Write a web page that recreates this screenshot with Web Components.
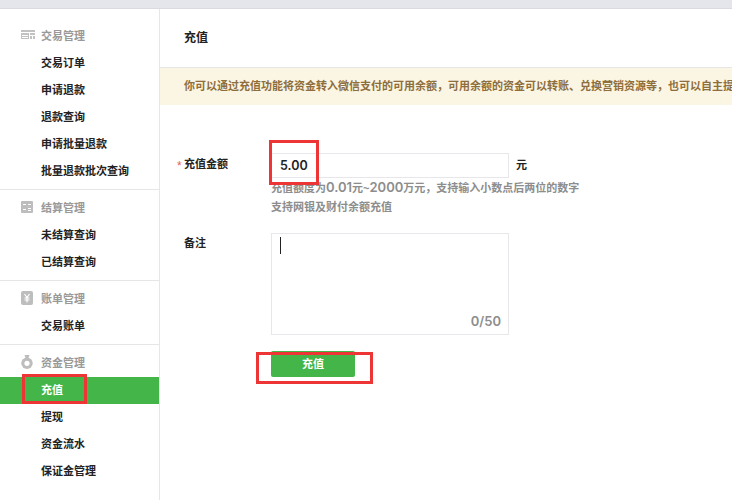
<!DOCTYPE html>
<html lang="zh">
<head>
<meta charset="utf-8">
<title>充值</title>
<style>
  html, body { margin: 0; height: 100%; overflow: hidden; background: #fff; }
  body { font-family: "Liberation Sans", "Noto Sans CJK SC", sans-serif; }
</style>
</head>
<body>
<pay-app>
  <side-nav slot="nav">
    <nav-group label="交易管理" icon="trade" items="交易订单,申请退款,退款查询,申请批量退款,批量退款批次查询"></nav-group>
    <nav-group label="结算管理" icon="settle" items="未结算查询,已结算查询"></nav-group>
    <nav-group label="账单管理" icon="bill" items="交易账单"></nav-group>
    <nav-group label="资金管理" icon="fund" items="充值,提现,资金流水,保证金管理" active="充值" last></nav-group>
  </side-nav>
  <recharge-page></recharge-page>
</pay-app>
<script>
class PayApp extends HTMLElement {
  constructor() {
    super();
    const shadow = this.attachShadow({ mode: "open" });
    shadow.innerHTML = `
      <style>
        :host { display: block; position: relative; height: 500px; overflow: hidden; }
        .top { height: 8px; background: #e4e6eb; border-bottom: 1px solid #d9dbdf; }
        .body { display: flex; height: 491px; }
        .main { flex: 1; min-width: 0; overflow: hidden; }
        .mark { position: absolute; border: 3px solid #ee3536; box-sizing: border-box; }
      </style>
      <div class="top"></div>
      <div class="body">
        <slot name="nav"></slot>
        <div class="main"><slot></slot></div>
      </div>
      <!-- red annotation boxes drawn over the screenshot -->
      <div class="mark" style="left:22px;top:374px;width:65px;height:30px"></div>
      <div class="mark" style="left:269px;top:140px;width:50px;height:45px"></div>
      <div class="mark" style="left:256px;top:352px;width:117px;height:32px"></div>
    `;
  }
}

class SideNav extends HTMLElement {
  constructor() {
    super();
    const shadow = this.attachShadow({ mode: "open" });
    shadow.innerHTML = `
      <style>
        :host { display: block; width: 159px; flex: none; border-right: 1px solid #e6e6e6; padding-top: 13px; }
      </style>
      <slot></slot>
    `;
  }
}

const NAV_ICONS = {
  trade: `<svg width="14" height="9" viewBox="0 0 14 9"><path fill="#c2c2c2" d="M0 0h14v2H0zM0 3h8v6H0zM9 3h5v2H9zM9 6h2v3H9zM12 6h2v3h-2z"/><path fill="#fff" d="M1 5h6v1H1zM1 7h6v1H1z"/></svg>`,
  settle: `<svg width="12" height="12" viewBox="0 0 12 12"><rect width="12" height="12" rx="1" fill="#bdbdbd"/><path fill="#fff" d="M2 3h3v1H2zM7 3h3v1H7zM2 8h3v1H2zM7 7h3v1H7zM7 9h3v1H7z"/></svg>`,
  bill: `<svg width="12" height="14" viewBox="0 0 12 14"><rect width="12" height="14" rx="2" fill="#bdbdbd"/><path fill="none" stroke="#fff" stroke-width="1.2" d="M3.500 3 6 6.500 8.500 3M6 6.500V11.500M3.500 7h5M3.500 9h5"/></svg>`,
  fund: `<svg width="12" height="14" viewBox="0 0 12 14"><path fill="#bdbdbd" d="M3.500 0h5L7.500 3h-3z"/><circle cx="6" cy="8.300" r="5.700" fill="#bdbdbd"/><circle cx="6" cy="8.300" r="2.600" fill="#fff"/></svg>`
};

class NavGroup extends HTMLElement {
  connectedCallback() {
    const shadow = this.attachShadow({ mode: "open" });
    const items = this.getAttribute("items").split(",");
    const active = this.getAttribute("active");
    const rows = items.map(t => `<a class="${t === active ? "on" : ""}">${t}</a>`).join("");
    shadow.innerHTML = `
      <style>
        :host { display: block; padding-bottom: 4px; margin-bottom: 4px; border-bottom: 1px solid #e6e6e6; }
        :host([last]) { border-bottom: 0; }
        .head { display: flex; align-items: center; height: 25px; margin-bottom: 3px; color: #999; font-size: 11px; font-weight: 700; }
        .ico { width: 41px; flex: none; display: flex; padding-left: 21px; box-sizing: border-box; }
        a { display: block; height: 27px; line-height: 27px; padding-left: 41px; font-size: 11px; font-weight: 700; color: #222; }
        a.on { background: #44b549; color: #fff; }
      </style>
      <div class="head"><span class="ico">${NAV_ICONS[this.getAttribute("icon")]}</span>${this.getAttribute("label")}</div>
      ${rows}
    `;
  }
}

class RechargePage extends HTMLElement {
  constructor() {
    super();
    const shadow = this.attachShadow({ mode: "open" });
    shadow.innerHTML = `
      <style>
        :host { display: block; font-size: 11px; font-weight: 700; color: #222; }
        h1 { margin: 0; height: 59px; line-height: 59px; padding-left: 24px; font-size: 12px; font-weight: 700; color: #222; border-bottom: 1px solid #e6e6e6; box-sizing: border-box; }
        .notice { height: 37px; line-height: 36px; padding-left: 24px; background: #fbf5e3; color: #8d6e3c; white-space: nowrap; overflow: hidden; font-size: 11px; }
        form { display: grid; grid-template-columns: 111px 238px auto; padding: 48px 0 0 0; justify-content: start; }
        .lab { padding-left: 24px; position: relative; line-height: 20px; }
        .lab.first { padding-top: 1px; }
        .req { position: absolute; left: 17px; top: 3px; font-size: 12px; color: #e15f63; font-weight: 400; }
        .num { font-family: Inter, "Liberation Sans", sans-serif; font-weight: 600; }
        .amount { height: 25px; box-sizing: border-box; border: 1px solid #e7e7eb; padding-left: 8px; line-height: 23px; font-size: 12.500px; color: #222; }
        .unit { padding-left: 7px; line-height: 24px; }
        .hint { grid-column: 2 / 4; color: #8d8d8d; font-size: 11px; line-height: 19px; margin-top: 1px; white-space: nowrap; }
        .hint .num { font-size: 13px; line-height: 1; }
        .gap { grid-column: 1 / 4; height: 16px; }
        .area { height: 102px; box-sizing: border-box; border: 1px solid #e7e7eb; position: relative; }
        .caret { position: absolute; left: 8px; top: 3px; width: 1px; height: 17px; background: #222; }
        .count { position: absolute; right: 7px; bottom: 5px; font-size: 13px; color: #8d8d8d; }
        .btn { grid-column: 2; margin-top: 16px; width: 84px; height: 26px; line-height: 26px; border-radius: 2px; background: #44b549; color: #fff; text-align: center; font-size: 11px; }
      </style>
      <h1>充值</h1>
      <div class="notice">你可以通过充值功能将资金转入微信支付的可用余额，可用余额的资金可以转账、兑换营销资源等，也可以自主提现</div>
      <form>
        <div class="lab first"><span class="req">*</span>充值金额</div>
        <div class="amount num">5.00</div>
        <div class="unit">元</div>
        <div class="hint">充值额度为<span class="num">0.01</span>元~<span class="num">2000</span>万元，支持输入小数点后两位的数字<br>支持网银及财付余额充值</div>
        <div class="gap"></div>
        <div class="lab">备注</div>
        <div class="area"><span class="caret"></span><span class="count num">0/50</span></div>
        <div></div>
        <div class="btn">充值</div>
      </form>
    `;
  }
}

customElements.define("pay-app", PayApp);
customElements.define("side-nav", SideNav);
customElements.define("nav-group", NavGroup);
customElements.define("recharge-page", RechargePage);
</script>
</body>
</html>
